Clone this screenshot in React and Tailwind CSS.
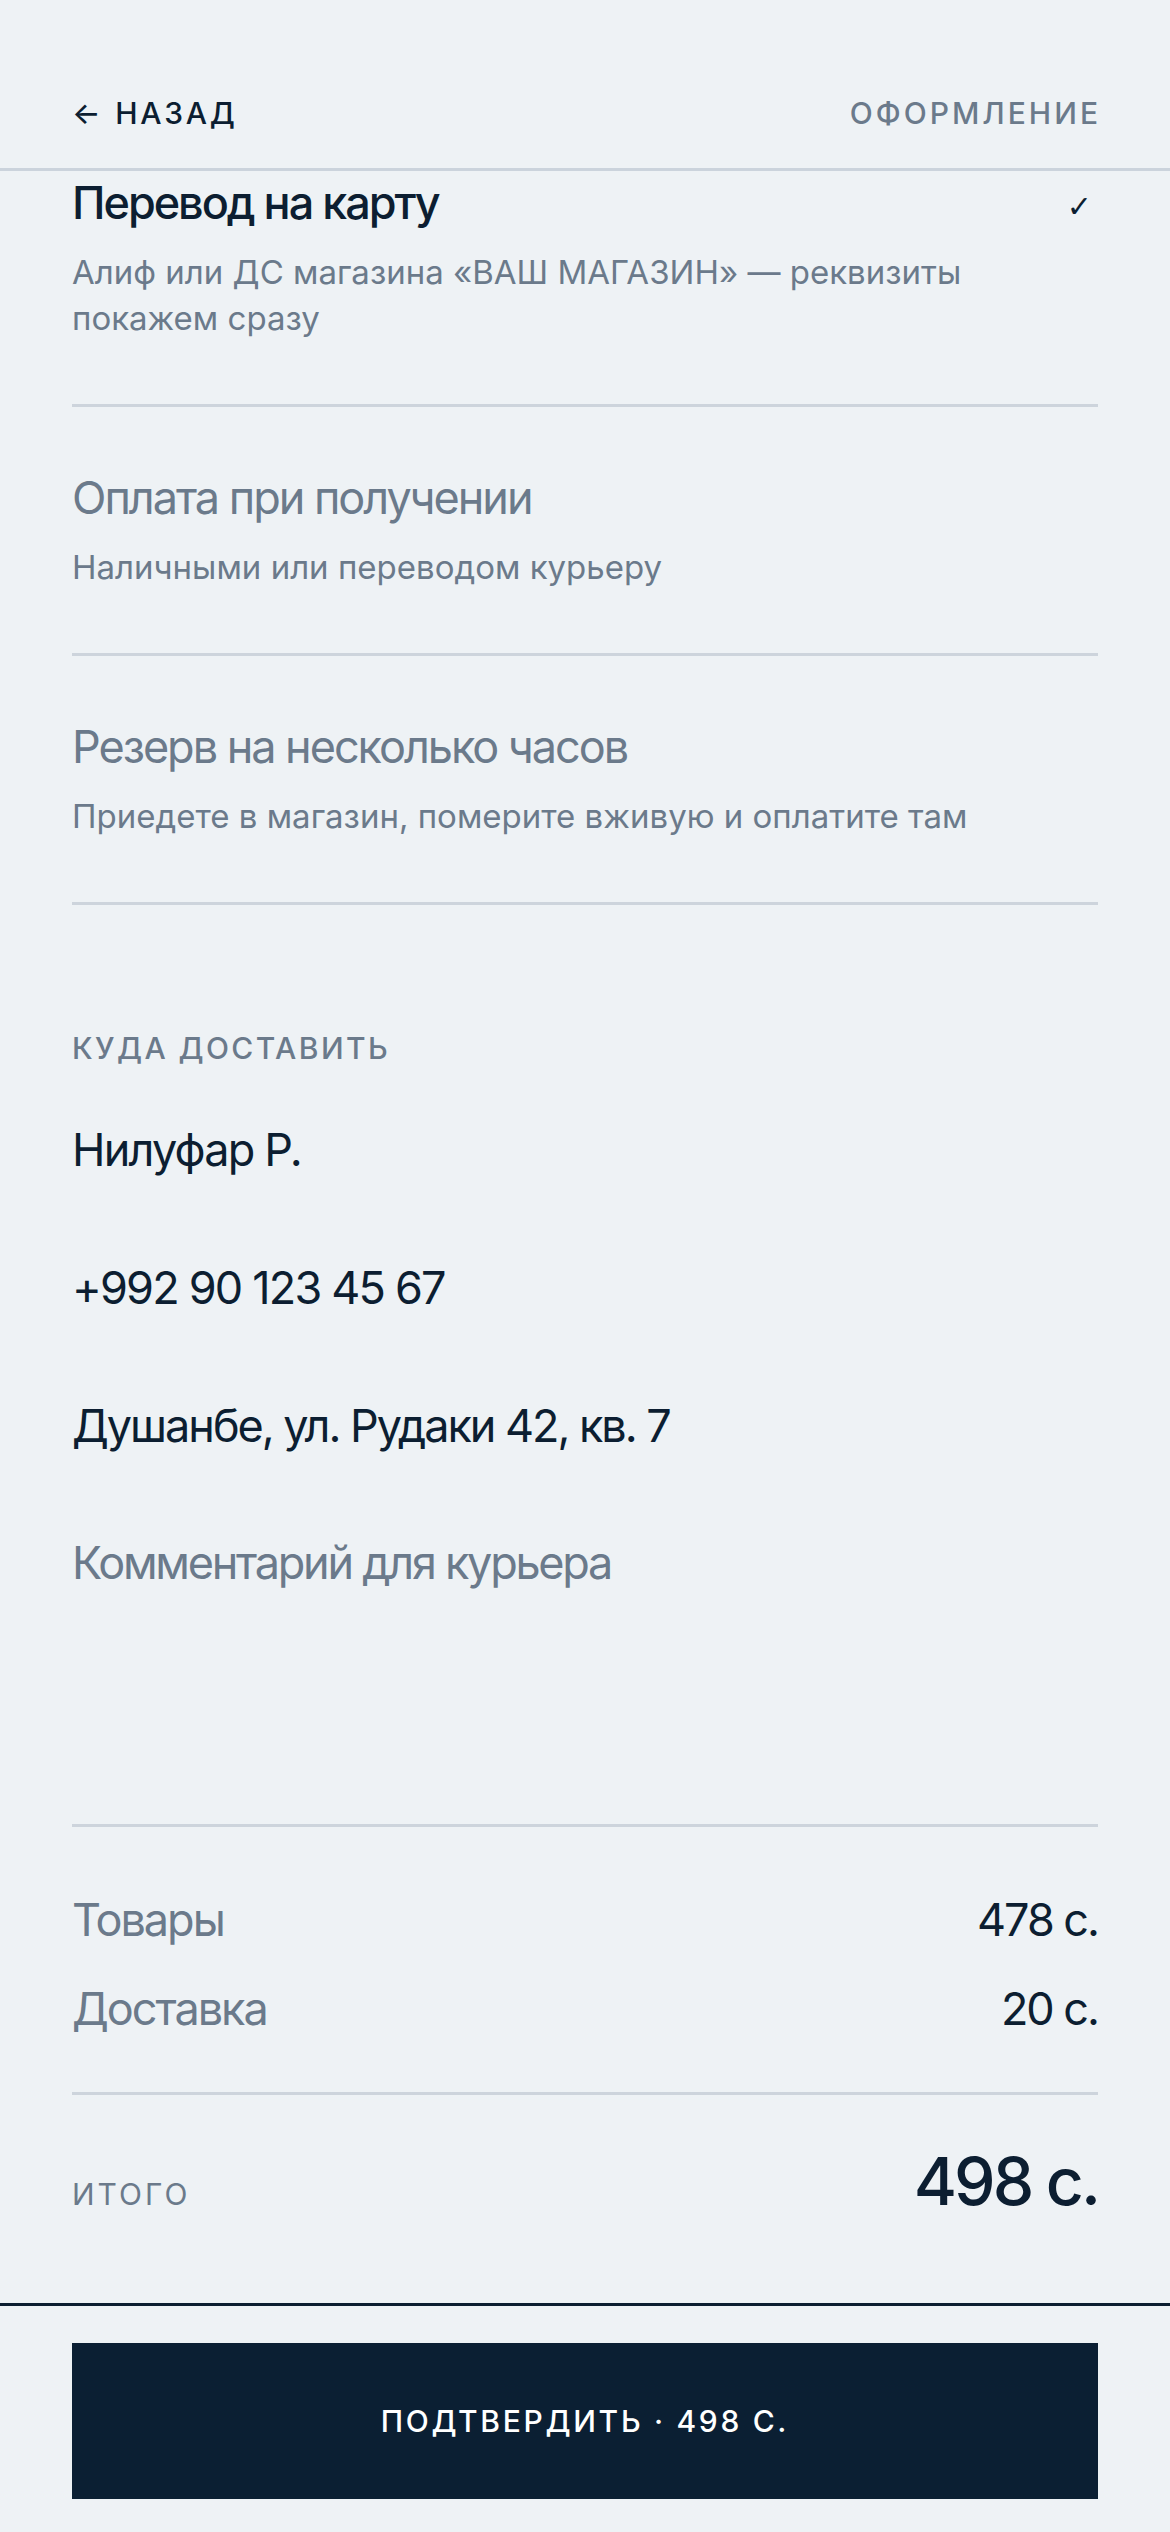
import React from "react";

const options = [
  {
    title: "Перевод на карту",
    desc: "Алиф или ДС магазина «ВАШ МАГАЗИН» — реквизиты покажем сразу",
    active: true,
  },
  {
    title: "Оплата при получении",
    desc: "Наличными или переводом курьеру",
    active: false,
  },
  {
    title: "Резерв на несколько часов",
    desc: "Приедете в магазин, померите вживую и оплатите там",
    active: false,
  },
];

export default function App() {
  return (
    <div className="w-full min-h-screen bg-[#eef2f5] font-[Inter,sans-serif] text-[#0c1e31]">
      <header className="flex items-center justify-between px-[72px] pt-[95px] pb-[37px] border-b-[3px] border-[#cbd3dc]">
        <button className="flex items-center text-[30px] leading-[36px] font-medium tracking-[0.09em] text-[#0c1e31]">
          <span className="mr-[12px]">←</span>
          <span>НАЗАД</span>
        </button>
        <span className="text-[30px] leading-[36px] font-medium tracking-[0.1em] text-[#6b7a8b] -mr-[3px]">
          ОФОРМЛЕНИЕ
        </span>
      </header>

      <main className="px-[72px]">
        <div>
          {options.map((o, i) => (
            <div
              key={o.title}
              className={
                "flex items-start justify-between gap-[40px] border-b-[3px] border-[#cdd4dc] pb-[63px] " +
                (i === 0 ? "pt-[4px]" : "pt-[63px]")
              }
            >
              <div className="flex-1">
                <div
                  className={
                    "text-[45px] leading-[56px] tracking-[-0.045em] " +
                    (o.active ? "font-medium text-[#0c1e31]" : "font-normal text-[#6b7a8b]")
                  }
                >
                  {o.title}
                </div>
                <div className="mt-[18px] text-[33px] leading-[46px] text-[#6b7a8b]">{o.desc}</div>
              </div>
              {o.active && (
                <span className="leading-[56px] pt-[4px] text-[30px] font-['DejaVu_Sans',sans-serif] text-[#0c1e31] pr-[6px]">
                  ✓
                </span>
              )}
            </div>
          ))}
        </div>

        <section className="pt-[125px]">
          <div className="text-[30px] leading-[36px] font-medium tracking-[0.08em] text-[#6b7a8b]">
            КУДА ДОСТАВИТЬ
          </div>
          <div className="mt-[14px] flex flex-col">
            <input
              defaultValue="Нилуфар Р."
              className="block w-full bg-transparent outline-none py-[42px] text-[45px] leading-[54px] tracking-[-0.04em] h-[138px] text-[#0c1e31]"
            />
            <input
              defaultValue="+992 90 123 45 67"
              className="block w-full bg-transparent outline-none py-[42px] text-[45px] leading-[54px] tracking-[-0.04em] h-[138px] text-[#0c1e31]"
            />
            <input
              defaultValue="Душанбе, ул. Рудаки 42, кв. 7"
              className="block w-full bg-transparent outline-none py-[42px] text-[45px] leading-[54px] tracking-[-0.045em] h-[138px] text-[#0c1e31]"
            />
            <textarea
              placeholder="Комментарий для курьера"
              className="block w-full h-[330px] resize-none bg-transparent outline-none py-[42px] text-[45px] leading-[54px] tracking-[-0.05em] text-[#0c1e31] placeholder:text-[#6b7a8b]"
            />
          </div>
        </section>

        <section className="border-t-[3px] border-[#cdd4dc] pt-[66px] pb-[56px] border-b-[3px] flex flex-col gap-[35px]">
          <div className="flex justify-between text-[45px] leading-[54px] tracking-[-0.045em]">
            <span className="text-[#6b7a8b]">Товары</span>
            <span className="text-[#0c1e31]">478 с.</span>
          </div>
          <div className="flex justify-between text-[45px] leading-[54px] tracking-[-0.045em]">
            <span className="text-[#6b7a8b]">Доставка</span>
            <span className="text-[#0c1e31]">20 с.</span>
          </div>
        </section>

        <div className="flex items-baseline justify-between pt-[53px] pb-[86px]">
          <span className="text-[30px] tracking-[0.1em] text-[#6b7a8b]">ИТОГО</span>
          <span className="text-[66px] leading-[66px] font-medium tracking-[-0.045em] text-[#0c1e31]">498 с.</span>
        </div>
      </main>

      <footer className="border-t-[3px] border-[#0c1e31] px-[72px] pt-[37px] pb-[36px]">
        <button className="w-full h-[156px] bg-[#0b1f33] text-white text-[30px] font-medium tracking-[0.09em]">
          ПОДТВЕРДИТЬ · 498 С.
        </button>
      </footer>
    </div>
  );
}
